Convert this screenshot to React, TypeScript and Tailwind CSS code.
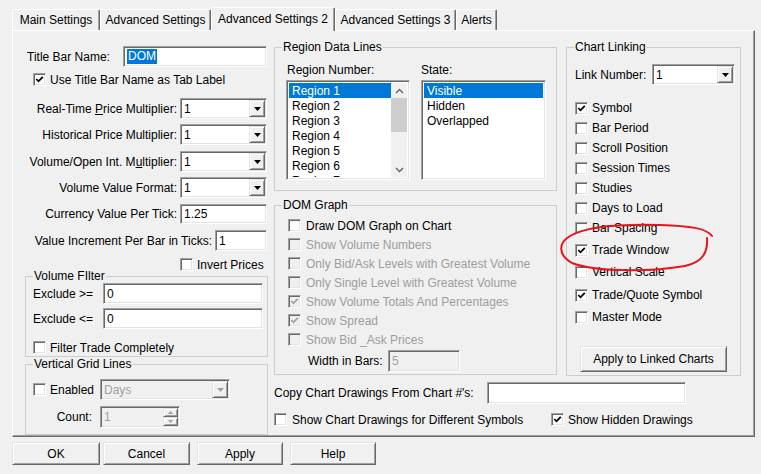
import React from 'react';

// classic Windows control frames
const sunkenFrame =
  'border border-t-[#a0a0a0] border-l-[#a0a0a0] border-r-white border-b-white shadow-[inset_1px_1px_0_#696969,inset_-1px_-1px_0_#e3e3e3]';
const raisedFrame =
  'border border-t-[#e3e3e3] border-l-[#e3e3e3] border-r-[#696969] border-b-[#696969] shadow-[inset_1px_1px_0_#ffffff,inset_-1px_-1px_0_#a0a0a0]';

function Check({ checked = false, disabled = false }: { checked?: boolean; disabled?: boolean }) {
  return (
    <span
      className={`flex h-[13px] w-[13px] shrink-0 items-center justify-center ${sunkenFrame} ${
        disabled ? 'bg-[#f0f0f0]' : 'bg-white'
      }`}
    >
      {checked && (
        <svg width="9" height="9" viewBox="0 0 9 9">
          <path d="M1.3 4 L3.5 6.3 L7.8 1.8" fill="none" stroke={disabled ? '#a0a0a0' : '#000'} strokeWidth="1.8" />
        </svg>
      )}
    </span>
  );
}

function Field({
  className = '',
  disabled = false,
  children,
}: {
  className?: string;
  disabled?: boolean;
  children?: React.ReactNode;
}) {
  return (
    <div
      className={`flex shrink-0 items-center pl-[3px] ${sunkenFrame} ${
        disabled ? 'bg-[#f0f0f0] text-[#a0a0a0]' : 'bg-white'
      } ${className}`}
    >
      {children}
    </div>
  );
}

function Combo({ value, className = '', disabled = false }: { value: string; className?: string; disabled?: boolean }) {
  return (
    <Field className={className} disabled={disabled}>
      <span className="flex-1">{value}</span>
      <span className={`mr-[1px] flex h-[17px] w-[16px] items-center justify-center bg-[#f0f0f0] ${raisedFrame}`}>
        <svg width="7" height="4" viewBox="0 0 7 4">
          <path d="M0 0 H7 L3.5 4 Z" fill={disabled ? '#a0a0a0' : '#000'} />
        </svg>
      </span>
    </Field>
  );
}

function Chevron({ up }: { up?: boolean }) {
  return (
    <svg width="9" height="6" viewBox="0 0 9 6">
      <path d={up ? 'M1 5 L4.5 1.5 L8 5' : 'M1 1 L4.5 4.5 L8 1'} fill="none" stroke="#606060" strokeWidth="1.3" />
    </svg>
  );
}

function Btn({ children, className = '' }: { children: React.ReactNode; className?: string }) {
  return (
    <div className={`flex shrink-0 items-center justify-center bg-[#f0f0f0] ${raisedFrame} ${className}`}>{children}</div>
  );
}

function Tab({ label, className = '', active = false }: { label: string; className?: string; active?: boolean }) {
  return (
    <div
      className={`flex shrink-0 items-center justify-center rounded-t-[2px] border border-b-0 border-t-white border-l-white border-r-[#696969] bg-[#f0f0f0] shadow-[inset_-1px_0_0_#a0a0a0] ${
        active ? 'relative z-10 -mb-[1px] h-[24px] pb-[2px]' : 'h-[21px]'
      } ${className}`}
    >
      {label}
    </div>
  );
}

const regionItems = ['Region 1', 'Region 2', 'Region 3', 'Region 4', 'Region 5', 'Region 6', 'Region 7'];
const stateItems = ['Visible', 'Hidden', 'Overlapped'];

const domChecks: { label: string; checked?: boolean; disabled?: boolean }[] = [
  { label: 'Draw DOM Graph on Chart' },
  { label: 'Show Volume Numbers', disabled: true },
  { label: 'Only Bid/Ask Levels with Greatest Volume', disabled: true },
  { label: 'Only Single Level with Greatest Volume', disabled: true },
  { label: 'Show Volume Totals And Percentages', checked: true, disabled: true },
  { label: 'Show Spread', checked: true, disabled: true },
  { label: 'Show Bid _Ask Prices', disabled: true },
];

const linkChecks: { label: string; checked?: boolean; mt: string }[] = [
  { label: 'Symbol', checked: true, mt: 'mt-[13px]' },
  { label: 'Bar Period', mt: 'mt-0' },
  { label: 'Scroll Position', mt: 'mt-0' },
  { label: 'Session Times', mt: 'mt-0' },
  { label: 'Studies', mt: 'mt-0' },
  { label: 'Days to Load', mt: 'mt-0' },
  { label: 'Bar Spacing', mt: 'mt-0' },
  { label: 'Trade Window', checked: true, mt: 'mt-[2px]' },
  { label: 'Vertical Scale', mt: 'mt-[2px]' },
  { label: 'Trade/Quote Symbol', checked: true, mt: 'mt-[3px]' },
  { label: 'Master Mode', mt: 'mt-[2px]' },
];

function LeftColumn() {
  return (
    <div className="flex w-[243px] shrink-0 flex-col">
      <div className="mt-[15px] flex h-[21px] items-center">
        <span className="w-[98px] pl-[2px]">Title Bar Name:</span>
        <Field className="h-[21px] w-[144px]">
          <span className="bg-[#0078d7] px-[1px] leading-[15px] text-white">DOM</span>
        </Field>
      </div>
      <div className="mt-[6px] flex h-[13px] items-center pl-[8px]">
        <Check checked />
        <span className="ml-[4px]">Use Title Bar Name as Tab Label</span>
      </div>

      <div className="mt-[12px] flex h-[21px] items-center">
        <span className="w-[155px] pr-[3px] text-right">
          Real-Time <span className="underline">P</span>rice Multiplier:
        </span>
        <Combo value="1" className="h-[21px] w-[87px]" />
      </div>
      <div className="mt-[5px] flex h-[21px] items-center">
        <span className="w-[155px] pr-[3px] text-right">Historical Price Multiplier:</span>
        <Combo value="1" className="h-[21px] w-[87px]" />
      </div>
      <div className="mt-[6px] flex h-[21px] items-center">
        <span className="w-[155px] pr-[3px] text-right">
          Volume/Open Int. M<span className="underline">u</span>ltiplier:
        </span>
        <Combo value="1" className="h-[21px] w-[87px]" />
      </div>
      <div className="mt-[5px] flex h-[21px] items-center">
        <span className="w-[155px] pr-[3px] text-right">Volume Value Format:</span>
        <Combo value="1" className="h-[21px] w-[87px]" />
      </div>
      <div className="mt-[6px] flex h-[20px] items-center">
        <span className="w-[155px] pr-[3px] text-right">Currency Value Per Tick:</span>
        <Field className="h-[20px] w-[87px]">1.25</Field>
      </div>
      <div className="mt-[6px] flex h-[21px] items-center">
        <span className="w-[190px] pr-[3px] text-right">Value Increment Per Bar in Ticks:</span>
        <Field className="h-[21px] w-[52px]">1</Field>
      </div>
      <div className="mt-[7px] flex h-[13px] items-center pl-[155px]">
        <Check />
        <span className="ml-[4px]">Invert Prices</span>
      </div>

      <fieldset className="-mt-[2px] border border-[#cdcdcd] pb-[2px]">
        <legend className="ml-[7px] px-[1px] leading-[14px]">Volume FIlter</legend>
        <div className="flex h-[21px] items-center">
          <span className="w-[77px] pl-[7px]">Exclude &gt;=</span>
          <Field className="h-[21px] w-[160px]">0</Field>
        </div>
        <div className="mt-[4px] flex h-[21px] items-center">
          <span className="w-[77px] pl-[7px]">Exclude &lt;=</span>
          <Field className="h-[21px] w-[160px]">0</Field>
        </div>
        <div className="mt-[12px] flex h-[13px] items-center pl-[7px]">
          <Check />
          <span className="ml-[4px]">Filter Trade Completely</span>
        </div>
      </fieldset>

      <fieldset className="border border-[#cdcdcd] pb-[6px]">
        <legend className="ml-[7px] px-[1px] leading-[14px]">Vertical Grid Lines</legend>
        <div className="mt-[8px] flex h-[21px] items-center pl-[7px]">
          <Check />
          <span className="ml-[4px] w-[50px]">Enabled</span>
          <Combo value="Days" disabled className="h-[21px] w-[130px]" />
        </div>
        <div className="mt-[6px] flex h-[22px] items-center">
          <span className="w-[74px] pr-[8px] text-right">Count:</span>
          <Field disabled className="h-[22px] w-[80px]">
            <span className="flex-1">1</span>
            <span className="mr-[1px] flex h-[18px] w-[15px] flex-col">
              <span className={`flex h-[9px] items-center justify-center ${raisedFrame}`}>
                <svg width="5" height="3" viewBox="0 0 5 3">
                  <path d="M0 3 H5 L2.5 0 Z" fill="#a0a0a0" />
                </svg>
              </span>
              <span className={`flex h-[9px] items-center justify-center ${raisedFrame}`}>
                <svg width="5" height="3" viewBox="0 0 5 3">
                  <path d="M0 0 H5 L2.5 3 Z" fill="#a0a0a0" />
                </svg>
              </span>
            </span>
          </Field>
        </div>
      </fieldset>
    </div>
  );
}

function ListBox({ items, width, scroll }: { items: string[]; width: string; scroll?: boolean }) {
  return (
    <div className={`flex h-[100px] shrink-0 bg-white p-[2px] ${sunkenFrame} ${width}`}>
      <div className="flex-1 overflow-hidden">
        {items.map((it, i) => (
          <div
            key={it}
            className={`flex h-[15px] items-center pl-[3px] ${i === 0 ? 'bg-[#0078d7] text-white' : ''}`}
          >
            {it}
          </div>
        ))}
      </div>
      {scroll && (
        <div className="flex w-[16px] flex-col bg-[#f0f0f0]">
          <div className="flex h-[15px] items-center justify-center">
            <Chevron up />
          </div>
          <div className="h-[34px] bg-[#cdcdcd]" />
          <div className="flex-1" />
          <div className="flex h-[15px] items-center justify-center">
            <Chevron />
          </div>
        </div>
      )}
    </div>
  );
}

function MiddleGroups() {
  return (
    <div className="flex w-[283px] shrink-0 flex-col">
      <fieldset className="mt-[9px] border border-[#cdcdcd] pb-[10px]">
        <legend className="ml-[7px] px-[1px] leading-[14px]">Region Data Lines</legend>
        <div className="mt-[9px] flex h-[14px] items-center">
          <span className="w-[146px] pl-[12px]">Region Number:</span>
          <span>State:</span>
        </div>
        <div className="mt-[3px] flex pl-[11px]">
          <ListBox items={regionItems} width="w-[124px]" scroll />
          <div className="w-[11px]" />
          <ListBox items={stateItems} width="w-[125px]" />
        </div>
      </fieldset>

      <fieldset className="mt-[7px] border border-[#cdcdcd] pb-[2px]">
        <legend className="ml-[7px] px-[1px] leading-[14px]">DOM Graph</legend>
        <div className="mt-[4px]">
          {domChecks.map((c) => (
            <div key={c.label} className="flex h-[19px] items-center pl-[13px]">
              <Check checked={c.checked} disabled={c.disabled} />
              <span className={`ml-[5px] ${c.disabled ? 'text-[#9d9d9d]' : ''}`}>{c.label}</span>
            </div>
          ))}
        </div>
        <div className="mt-[1px] flex h-[22px] items-center pl-[33px]">
          <span className="w-[80px]">Width in Bars:</span>
          <Field disabled className="h-[22px] w-[72px]">
            5
          </Field>
        </div>
      </fieldset>
    </div>
  );
}

function ChartLinking() {
  return (
    <fieldset className="mt-[9px] w-[175px] shrink-0 border border-[#cdcdcd] pb-[3px]">
      <legend className="ml-[7px] px-[1px] leading-[14px]">Chart Linking</legend>
      <div className="mt-[10px] flex h-[21px] items-center pl-[8px]">
        <span className="w-[77px]">Link Number:</span>
        <Combo value="1" className="h-[21px] w-[83px]" />
      </div>
      {linkChecks.map((c) => (
        <div key={c.label} className={`flex h-[20px] items-center pl-[8px] ${c.mt}`}>
          <Check checked={c.checked} />
          <span className="ml-[4px]">{c.label}</span>
        </div>
      ))}
      <Btn className="ml-[13px] mt-[19px] h-[26px] w-[147px]">Apply to Linked Charts</Btn>
    </fieldset>
  );
}

export default function App() {
  return (
    <div
      className={`relative h-[474px] w-[761px] overflow-hidden bg-[#f0f0f0] text-[12px] leading-[14px] text-black font-['Liberation_Sans',Arial,sans-serif]`}
    >
      {/* tab strip */}
      <div className="flex h-[30px] items-end pl-[12px]">
        <Tab label="Main Settings" className="w-[88px]" />
        <Tab label="Advanced Settings" className="w-[111px]" />
        <Tab label="Advanced Settings 2" className="w-[124px]" active />
        <Tab label="Advanced Settings 3" className="w-[121px]" />
        <Tab label="Alerts" className="w-[41px]" />
      </div>

      {/* tab page */}
      <div className="ml-[12px] h-[407px] w-[743px] border border-t-white border-l-white border-r-[#696969] border-b-[#696969] shadow-[inset_-1px_-1px_0_#a0a0a0]">
        <div className="flex pl-[12px]">
          <LeftColumn />
          <div className="ml-[6px] flex flex-col">
            <div className="flex">
              <MiddleGroups />
              <div className="ml-[9px]">
                <ChartLinking />
              </div>
            </div>
            <div className="mt-[6px] flex h-[22px] items-center">
              <span className="w-[213px]">Copy Chart Drawings From Chart #'s:</span>
              <Field className="h-[22px] w-[199px]" />
            </div>
            <div className="mt-[9px] flex h-[13px] items-center">
              <Check />
              <span className="ml-[5px] w-[259px]">Show Chart Drawings for Different Symbols</span>
              <Check checked />
              <span className="ml-[4px]">Show Hidden Drawings</span>
            </div>
          </div>
        </div>
      </div>

      {/* dialog buttons */}
      <div className="mt-[5px] flex pl-[12px]">
        <Btn className="h-[23px] w-[88px]">OK</Btn>
        <Btn className="ml-[3px] h-[23px] w-[87px]">Cancel</Btn>
        <Btn className="ml-[7px] h-[23px] w-[86px]">Apply</Btn>
        <Btn className="ml-[7px] h-[23px] w-[86px]">Help</Btn>
      </div>

      {/* hand-drawn red annotation */}
      <svg className="pointer-events-none absolute left-0 top-0" width="761" height="474" viewBox="0 0 761 474">
        <path
          d="M 712 236 C 706 228, 690 226, 660 225 C 620 224, 585 227, 570 236 C 558 243, 558 255, 572 263 C 595 272, 650 272, 685 266 C 703 262, 708 252, 707 238"
          fill="none"
          stroke="#e8141c"
          strokeWidth="2"
          strokeLinecap="round"
        />
      </svg>
    </div>
  );
}
